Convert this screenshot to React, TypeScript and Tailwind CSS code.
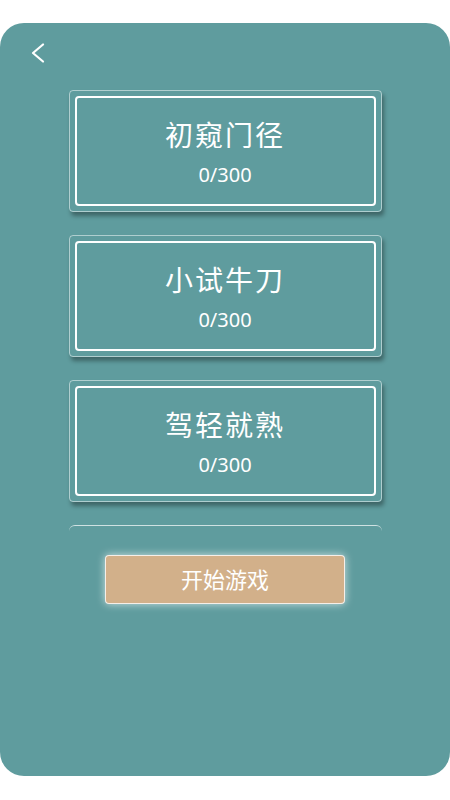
const levels = [
  { name: "初窥门径", done: 0, total: 300 },
  { name: "小试牛刀", done: 0, total: 300 },
  { name: "驾轻就熟", done: 0, total: 300 },
];

export default function App() {
  return (
    <div
      className="w-[450px] h-[800px] bg-white pt-[23px] pb-[24px]"
      style={{ fontFamily: '"Noto Sans", "Noto Sans CJK SC", sans-serif' }}
    >
      <div className="h-full bg-[#5f9c9e] rounded-[24px] flex flex-col">
        <div className="h-[67px] pl-[30px] pt-[20px]">
          <svg width="16" height="20" viewBox="0 0 16 20" fill="none">
            <polyline
              points="13,1.5 3,10 13,18.5"
              stroke="white"
              strokeWidth="2.2"
              strokeLinecap="round"
              strokeLinejoin="round"
            />
          </svg>
        </div>
        <div className="flex flex-col items-center gap-[23px]">
          {levels.map((lv) => (
            <div
              key={lv.name}
              className="w-[313px] h-[122px] rounded-[4px] border border-white/50 p-[5px] shadow-[2px_4px_4px_rgba(0,0,0,0.35)]"
            >
              <div className="h-full rounded-[4px] border-2 border-white flex flex-col items-center justify-center text-white pt-[4px]">
                <div className="text-[28px] leading-[36px] tracking-[2px]">{lv.name}</div>
                <div className="text-[20px] leading-[28px] mt-[8px]">
                  {lv.done}/{lv.total}
                </div>
              </div>
            </div>
          ))}
        </div>
        <div className="mx-auto mt-[23px] w-[313px] h-[8px] border-t border-white/70 rounded-t-[6px]" />
        <button className="mx-auto mt-[22px] w-[240px] h-[49px] rounded-[4px] bg-[#d2b08a] border border-white/80 shadow-[0_0_8px_rgba(255,255,255,0.7)] text-white text-[22px]">
          开始游戏
        </button>
      </div>
    </div>
  );
}
